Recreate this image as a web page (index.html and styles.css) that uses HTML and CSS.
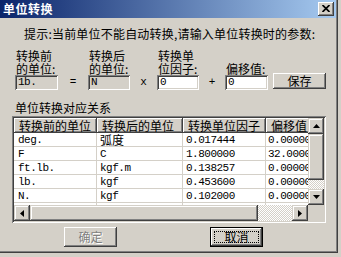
FILE: index.html
```html
<!DOCTYPE html>
<html lang="zh">
<head>
<meta charset="utf-8">
<title>单位转换</title>
<link rel="stylesheet" href="styles.css">
</head>
<body>
<div class="dlg">
  <div class="titlebar">
    <span class="title">单位转换</span>
    <button class="close" aria-label="关闭">
      <svg width="8" height="7" viewBox="0 0 8 7"><path d="M0.5 0 L7.5 7 M7.5 0 L0.5 7" stroke="#000" stroke-width="1.7" fill="none"/></svg>
    </button>
  </div>

  <p class="hint">提示:当前单位不能自动转换,请输入单位转换时的参数:</p>

  <div class="params">
    <label class="lbl c1">转换前<br>的单位:</label>
    <label class="lbl c3">转换后<br>的单位:</label>
    <label class="lbl c5">转换单<br>位因子:</label>
    <label class="lbl c7">偏移值:</label>

    <div class="edit ro c1">1b.</div>
    <span class="op c2">=</span>
    <div class="edit ro c3">N</div>
    <span class="op c4">x</span>
    <div class="edit c5">0</div>
    <span class="op c6">+</span>
    <div class="edit c7">0</div>
    <button class="btn save c9">保存</button>
  </div>

  <div class="group-label">单位转换对应关系</div>

  <div class="list">
    <div class="view">
      <div class="row head">
        <div class="hc w1">转换前的单位</div>
        <div class="hc w2">转换后的单位</div>
        <div class="hc w3">转换单位因子</div>
        <div class="hc w4">偏移值</div>
      </div>
      <div class="row">
        <div class="cell w1">deg.</div><div class="cell w2 cjk">弧度</div><div class="cell w3">0.017444</div><div class="cell w4">0.000000</div>
      </div>
      <div class="row">
        <div class="cell w1">F</div><div class="cell w2">C</div><div class="cell w3">1.800000</div><div class="cell w4">32.000000</div>
      </div>
      <div class="row">
        <div class="cell w1">ft.lb.</div><div class="cell w2">kgf.m</div><div class="cell w3">0.138257</div><div class="cell w4">0.000000</div>
      </div>
      <div class="row">
        <div class="cell w1">lb.</div><div class="cell w2">kgf</div><div class="cell w3">0.453600</div><div class="cell w4">0.000000</div>
      </div>
      <div class="row">
        <div class="cell w1">N.</div><div class="cell w2">kgf</div><div class="cell w3">0.102000</div><div class="cell w4">0.000000</div>
      </div>
      <div class="row">
        <div class="cell w1">N.</div><div class="cell w2">kgf</div><div class="cell w3">0.100000</div><div class="cell w4">0.000000</div>
      </div>
    </div>

    <div class="vscroll">
      <div class="sbtn"><svg width="7" height="4" viewBox="0 0 7 4"><path d="M3.5 0 L7 4 L0 4Z"/></svg></div>
      <div class="thumb vthumb"></div>
      <div class="trough"></div>
      <div class="sbtn"><svg width="7" height="4" viewBox="0 0 7 4"><path d="M0 0 L7 0 L3.5 4Z"/></svg></div>
    </div>

    <div class="hscroll">
      <div class="sbtn"><svg width="4" height="7" viewBox="0 0 4 7"><path d="M4 0 L4 7 L0 3.5Z"/></svg></div>
      <div class="thumb hthumb"></div>
      <div class="trough"></div>
      <div class="sbtn"><svg width="4" height="7" viewBox="0 0 4 7"><path d="M0 0 L4 3.5 L0 7Z"/></svg></div>
    </div>

    <div class="corner"></div>
  </div>

  <div class="actions">
    <button class="btn big" disabled>确定</button>
    <button class="btn big default"><span class="focus">取消</span></button>
  </div>
</div>
</body>
</html>
```

FILE: styles.css
```css
* { box-sizing: border-box; margin: 0; padding: 0; }

html, body { width: 341px; height: 257px; overflow: hidden; }

body {
  background: #d4d0c8;
  font-family: "Noto Sans CJK SC", "Liberation Sans", sans-serif;
  font-size: 12px;
  color: #000;
}

.dlg {
  width: 338px;
  height: 253px;
  padding: 0 2px 2px 0;
  background: #d4d0c8;
  box-shadow: inset -1px -1px 0 #404040, inset -2px -2px 0 #808080;
  display: flex;
  flex-direction: column;
}

/* title bar */
.titlebar {
  height: 18px;
  flex: none;
  display: flex;
  align-items: center;
  padding-left: 3px;
  background: linear-gradient(to right, #0a246a, #a6caf0);
}
.title {
  color: #fff;
  font-weight: bold;
  font-size: 12px;
  line-height: 18px;
  letter-spacing: 0.5px;
}
.close {
  margin-left: auto;
  margin-right: 2px;
  width: 16px;
  height: 14px;
  border: 0;
  background: #d4d0c8;
  box-shadow: inset -1px -1px 0 #404040, inset 1px 1px 0 #fff, inset -2px -2px 0 #808080;
  display: flex;
  align-items: center;
  justify-content: center;
  padding-bottom: 1px;
}

/* hint */
.hint {
  margin: 9px 0 0 24px;
  line-height: 13px;
  letter-spacing: 0.2px;
  white-space: nowrap;
}

/* parameter grid */
.params {
  margin: 9px 0 0 15px;
  display: grid;
  grid-template-columns: 43px 30px 42px 27px 42px 26px 43px 5px 53px;
  grid-template-rows: 26px 15px;
  align-items: end;
}
.lbl {
  grid-row: 1;
  line-height: 13px;
  white-space: nowrap;
  padding-left: 1px;
}
.c1 { grid-column: 1; }
.c2 { grid-column: 2; }
.c3 { grid-column: 3; }
.c4 { grid-column: 4; }
.c5 { grid-column: 5; }
.c6 { grid-column: 6; }
.c7 { grid-column: 7; }
.c9 { grid-column: 9; }

.edit {
  grid-row: 2;
  height: 15px;
  background: #fff;
  box-shadow: inset 1px 1px 0 #808080, inset -1px -1px 0 #fff, inset 2px 2px 0 #404040, inset -2px -2px 0 #d4d0c8;
  font-family: "Liberation Mono", monospace;
  font-size: 11px;
  line-height: 15px;
  padding-left: 3px;
  letter-spacing: -0.5px;
}
.edit.ro { background: #d4d0c8; }

.op {
  grid-row: 2;
  align-self: center;
  text-align: center;
  font-family: "Liberation Mono", monospace;
  font-size: 11px;
  line-height: 15px;
}

.btn {
  border: 0;
  background: #d4d0c8;
  font-family: "Noto Sans CJK SC", sans-serif;
  font-size: 12px;
  color: #000;
  box-shadow: inset -1px -1px 0 #404040, inset 1px 1px 0 #fff, inset -2px -2px 0 #808080;
}
.save {
  grid-row: 2;
  align-self: start;
  margin-top: -2px;
  height: 16px;
  line-height: 14px;
}

/* list */
.group-label {
  margin: 11px 0 0 15px;
  line-height: 13px;
}

.list {
  margin: 2px 0 0 12px;
  width: 314px;
  height: 107px;
  padding: 2px;
  box-shadow: inset 1px 1px 0 #808080, inset -1px -1px 0 #fff, inset 2px 2px 0 #404040, inset -2px -2px 0 #d4d0c8;
  display: grid;
  grid-template-columns: 294px 16px;
  grid-template-rows: 87px 16px;
}

.view {
  background: #fff;
  overflow: hidden;
}
.row {
  display: flex;
  height: 14px;
  border-bottom: 1px solid #d4d0c8;
  white-space: nowrap;
}
.row.head {
  height: 15px;
  border-bottom: 0;
}
.w1 { width: 83px; flex: none; }
.w2 { width: 86px; flex: none; }
.w3 { width: 83px; flex: none; }
.w4 { width: 80px; flex: none; }

.hc {
  background: #d4d0c8;
  box-shadow: inset -1px -1px 0 #404040, inset 1px 1px 0 #fff, inset -2px -2px 0 #808080;
  line-height: 15px;
  padding-left: 5px;
  overflow: hidden;
}
.cell {
  border-right: 1px solid #d4d0c8;
  font-family: "Liberation Mono", monospace;
  font-size: 11px;
  line-height: 14px;
  letter-spacing: -0.5px;
  padding-left: 3px;
  overflow: hidden;
}
.cell.w1 { padding-left: 4px; }
.cell.w4 { padding-left: 2px; }
.cell.cjk {
  font-family: "Noto Sans CJK SC", sans-serif;
  font-size: 12px;
  letter-spacing: 0;
  line-height: 13px;
}

.vscroll { display: flex; flex-direction: column; }
.hscroll { display: flex; }
.sbtn {
  width: 16px;
  height: 16px;
  flex: none;
  background: #d4d0c8;
  box-shadow: inset -1px -1px 0 #404040, inset 1px 1px 0 #d4d0c8, inset -2px -2px 0 #808080, inset 2px 2px 0 #fff;
  display: flex;
  align-items: center;
  justify-content: center;
}
.sbtn svg path { fill: #000; }
.thumb {
  flex: none;
  background: #d4d0c8;
  box-shadow: inset -1px -1px 0 #404040, inset 1px 1px 0 #d4d0c8, inset -2px -2px 0 #808080, inset 2px 2px 0 #fff;
}
.vthumb { height: 46px; }
.hthumb { width: 228px; }
.trough {
  flex: 1;
  background-color: #d4d0c8;
  background-image: conic-gradient(#fff 25%, #d4d0c8 0 50%, #fff 0 75%, #d4d0c8 0);
  background-size: 2px 2px;
}
.corner { background: #d4d0c8; }

/* bottom buttons */
.actions {
  margin-top: 4px;
  padding-left: 64px;
  display: flex;
  gap: 93px;
}
.big {
  width: 53px;
  height: 20px;
  line-height: 18px;
}
.btn:disabled {
  color: #808080;
  text-shadow: 1px 1px 0 #fff;
}
.default {
  box-shadow: inset 0 0 0 1px #000, inset -2px -2px 0 #404040, inset 2px 2px 0 #fff, inset -3px -3px 0 #808080;
  padding: 4px;
  display: flex;
}
.focus {
  flex: 1;
  border: 1px dotted #000;
  line-height: 10px;
  display: flex;
  align-items: center;
  justify-content: center;
}
```
